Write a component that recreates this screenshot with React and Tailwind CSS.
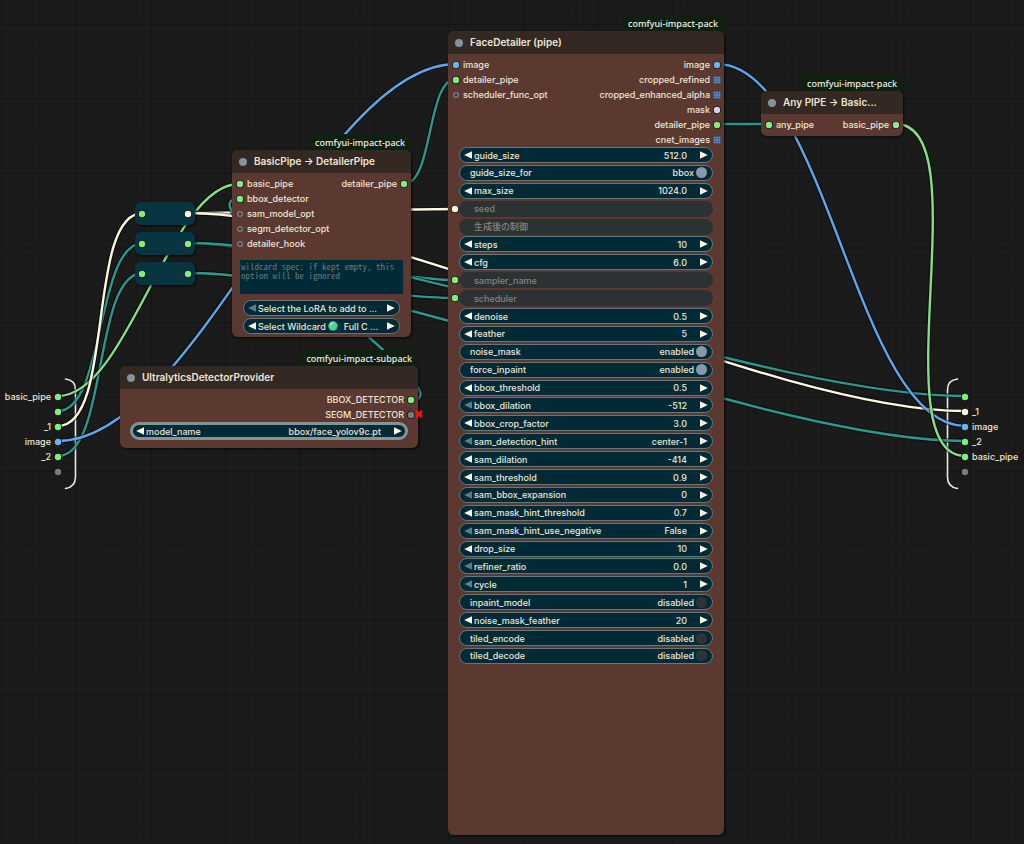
import React from 'react';
import clsx from 'clsx';

const DOT_COLORS = {
  green: 'text-[#7eee7e]',
  pipe: 'text-[#8fe68f]',
  blue: 'text-[#64b5f6]',
  cream: 'text-[#fff9e6]',
  mask: 'text-[#d4d0f0]',
  grey: 'text-[#7b7888]',
};

const LINKS = [
  { color: '#2b978d', from: [58, 411], to: [143, 243] },
  { color: '#2b978d', from: [58, 456], to: [143, 273] },
  { color: '#86de86', from: [58, 396], to: [239, 184] },
  { color: '#fdf6e0', from: [58, 426], to: [143, 213] },
  { color: '#5ea5ea', from: [58, 441], to: [456, 64] },
  { color: '#fdf6e0', from: [188, 213], to: [456, 209] },
  { color: '#2b978d', from: [188, 243], to: [456, 280] },
  { color: '#2b978d', from: [188, 243], to: [965, 396] },
  { color: '#2b978d', from: [188, 273], to: [456, 298] },
  { color: '#2b978d', from: [188, 273], to: [965, 441] },
  { color: '#fdf6e0', from: [188, 213], to: [965, 411] },
  { color: '#2b978d', from: [411, 400], to: [239, 199] },
  { color: '#2b978d', from: [404, 184], to: [456, 79] },
  { color: '#2b978d', from: [717, 124], to: [768, 124] },
  { color: '#5ea5ea', from: [717, 64], to: [965, 426] },
  { color: '#86de86', from: [896, 124], to: [965, 456] },
];

const DETAILER_WIDGETS = [
  { name: 'guide_size', value: '512.0' },
  { name: 'guide_size_for', type: 'toggle', value: 'bbox', on: true },
  { name: 'max_size', value: '1024.0' },
  { name: 'seed', type: 'linked', dot: 'cream' },
  { name: '生成後の制御', type: 'linked' },
  { name: 'steps', value: '10' },
  { name: 'cfg', value: '6.0' },
  { name: 'sampler_name', type: 'linked', dot: 'green' },
  { name: 'scheduler', type: 'linked', dot: 'green' },
  { name: 'denoise', value: '0.5' },
  { name: 'feather', value: '5' },
  { name: 'noise_mask', type: 'toggle', value: 'enabled', on: true },
  { name: 'force_inpaint', type: 'toggle', value: 'enabled', on: true },
  { name: 'bbox_threshold', value: '0.5' },
  { name: 'bbox_dilation', value: '-512', atMin: true },
  { name: 'bbox_crop_factor', value: '3.0' },
  { name: 'sam_detection_hint', type: 'combo', value: 'center-1', atMin: true },
  { name: 'sam_dilation', value: '-414' },
  { name: 'sam_threshold', value: '0.9' },
  { name: 'sam_bbox_expansion', value: '0', atMin: true },
  { name: 'sam_mask_hint_threshold', value: '0.7' },
  { name: 'sam_mask_hint_use_negative', type: 'combo', value: 'False', atMin: true },
  { name: 'drop_size', value: '10' },
  { name: 'refiner_ratio', value: '0.0', atMin: true },
  { name: 'cycle', value: '1', atMin: true },
  { name: 'inpaint_model', type: 'toggle', value: 'disabled' },
  { name: 'noise_mask_feather', value: '20' },
  { name: 'tiled_encode', type: 'toggle', value: 'disabled' },
  { name: 'tiled_decode', type: 'toggle', value: 'disabled' },
];

const linkPath = ({ from: [x1, y1], to: [x2, y2] }) => {
  const d = Math.hypot(x2 - x1, y2 - y1) * 0.25;
  return `M${x1} ${y1} C${x1 + d} ${y1} ${x2 - d} ${y2} ${x2} ${y2}`;
};

const Dot = ({ color = 'grey', shape = 'solid' }) => (
  <svg viewBox="0 0 8 8" className={clsx('size-2 shrink-0', DOT_COLORS[color])} aria-hidden="true">
    {shape === 'solid' && (
      <g>
        <circle cx="4" cy="4" r="4" fill="#1c1512" />
        <circle cx="4" cy="4" r="3.2" fill="currentColor" />
      </g>
    )}
    {shape === 'hollow' && <circle cx="4" cy="4" r="2.3" fill="#41302f" stroke="currentColor" strokeWidth="1.5" />}
    {shape === 'grid' && (
      <g>
        <rect x="0.5" y="0.5" width="7" height="7" fill="#2f4f7c" />
        {[0.7, 3.1, 5.5].map((y) => [0.7, 3.1, 5.5].map((x) => (
          <rect key={`${x}-${y}`} x={x} y={y} width="1.8" height="1.8" fill="#5f93cf" />
        )))}
      </g>
    )}
  </svg>
);

const Slot = ({ label, color, shape, output }) => (
  <li className={clsx('flex h-[15px] items-center gap-[3px]', output && 'flex-row-reverse')}>
    <Dot color={color} shape={shape} />
    <span>{label}</span>
  </li>
);

const Slots = ({ inputs = [], outputs = [] }) => (
  <div className="flex justify-between pr-[3px] pl-1 pt-[3px]">
    <ul>{inputs.map((s) => <Slot key={s.label} {...s} />)}</ul>
    <ul>{outputs.map((s) => <Slot key={s.label} {...s} output />)}</ul>
  </div>
);

const Node = ({ title, badge, className, children }) => (
  <section className={clsx('absolute flex flex-col rounded-md bg-[#5b3930] shadow-[1px_1px_3px_rgba(0,0,0,0.7)]', className)}>
    <span className="absolute right-0 bottom-full flex h-4 items-center rounded-t-sm bg-[#0f1f10] px-[6px] font-['Noto_Sans'] text-[9px] font-medium whitespace-nowrap text-[#f1f1ec]">
      {badge}
    </span>
    <h2 className="flex h-[23px] shrink-0 items-center gap-[7px] rounded-t-md bg-[#332822] pl-[7px] text-[10px] font-semibold whitespace-nowrap text-[#eee6d6]">
      <span className="size-2 rounded-full bg-[#839496]" />
      {title}
    </h2>
    {children}
  </section>
);

const Arrow = ({ left, dim, name }) => (
  <button type="button" aria-label={`${left ? 'Previous' : 'Next'} ${name}`} className="shrink-0">
    <svg viewBox="0 0 8 8" className={clsx('size-2', dim ? 'text-[#5f7a80]' : 'text-[#fdf6e3]')}>
      <path d={left ? 'M8 0.2 L0.2 4 L8 7.8Z' : 'M0 0.2 L7.8 4 L0 7.8Z'} fill="currentColor" />
    </svg>
  </button>
);

const pill = 'flex min-w-0 items-center rounded-full bg-[#002b36]';

const Widget = ({ name, type = 'number', value, on, atMin, selected }) => {
  if (type === 'linked') {
    return (
      <div className="flex h-4 min-w-0 flex-1 items-center rounded-full bg-[#2c3133] pl-[15px] text-[#86857f]">
        {name}
      </div>
    );
  }
  if (type === 'toggle') {
    return (
      <label className={clsx(pill, 'h-4 flex-1 border border-[#64777c] pr-[5px] pl-[10px]')}>
        <span className="flex-1">{name}</span>
        <span>{value}</span>
        <input
          type="checkbox"
          defaultChecked={on}
          className="ml-[2px] size-[11px] appearance-none rounded-full bg-[#2f3337] checked:bg-[#8899aa]"
        />
      </label>
    );
  }
  return (
    <div
      className={clsx(
        pill,
        'flex-1',
        selected ? 'h-[18px] border-[3px] border-[#839496] px-[3px]' : 'h-4 border border-[#64777c] px-1'
      )}
    >
      <Arrow left dim={atMin} name={name} />
      <label htmlFor={name} className="ml-[2px] shrink-0">{name}</label>
      {type === 'combo' ? (
        <select
          id={name}
          className="mr-[13px] min-w-0 flex-1 appearance-none bg-transparent outline-none [text-align-last:right]"
        >
          <option>{value}</option>
        </select>
      ) : (
        <input
          id={name}
          defaultValue={value}
          className="mr-[13px] w-0 min-w-0 flex-1 bg-transparent text-right outline-none"
        />
      )}
      <Arrow name={name} />
    </div>
  );
};

const Picker = ({ name, value, dim, children }) => (
  <div className={clsx(pill, 'relative h-4 border border-[#64777c] px-1')}>
    <Arrow left dim={dim} name={name} />
    <select aria-label={name} className="ml-[2px] min-w-0 flex-1 appearance-none bg-transparent outline-none">
      <option>{value}</option>
    </select>
    {children}
    <Arrow name={name} />
  </div>
);

const Reroute = ({ className, out }) => (
  <div
    className={clsx(
      'absolute flex h-[23px] w-[60px] items-center justify-between rounded-md bg-[#073642] px-[3px] shadow-[1px_1px_3px_rgba(0,0,0,0.7)]',
      className
    )}
  >
    <Dot color="green" />
    <Dot color={out} />
  </div>
);

export default function App() {
  return (
    <main className="relative min-h-screen w-full overflow-hidden bg-[#1b1b1b] font-['Inter','Noto_Sans_CJK_JP',sans-serif] text-[9px] leading-[15px] font-medium text-[#efe7d7]">
      <svg className="absolute inset-0 size-full" aria-hidden="true">
        <defs>
          <pattern id="minor" x="2" y="24" width="7.45" height="7.45" patternUnits="userSpaceOnUse">
            <path d="M0.5 0 V7.45 M0 0.5 H7.45" stroke="#191919" strokeWidth="1" />
          </pattern>
          <pattern id="major" x="1.5" y="24" width="74.5" height="74.5" patternUnits="userSpaceOnUse">
            <path d="M0.5 0 V74.5 M0 0.5 H74.5" stroke="#141414" strokeWidth="1" />
          </pattern>
        </defs>
        <rect width="100%" height="100%" fill="url(#minor)" />
        <rect width="100%" height="100%" fill="url(#major)" />
        <g fill="none" stroke="#e8e8e8" strokeWidth="1.6" strokeLinecap="round">
          <path d="M65.5 379 Q75.5 380 75.5 390 V477 Q75.5 487 65.5 488.5" />
          <path d="M957.5 379 Q947.5 380 947.5 390 V477 Q947.5 487 957.5 488.5" />
        </g>
        <g fill="none">
          {LINKS.map((link) => (
            <g key={linkPath(link)}>
              <path d={linkPath(link)} stroke="#000" strokeOpacity="0.5" strokeWidth="4.6" />
              <path d={linkPath(link)} stroke={link.color} strokeWidth="2.4" />
            </g>
          ))}
        </g>
      </svg>

      {/* subgraph inputs / outputs */}
      <ul className="absolute top-[389px] left-0 w-[62px]">
        <Slot label="basic_pipe" color="green" output />
        <Slot label="" color="green" output />
        <Slot label="_1" color="green" output />
        <Slot label="image" color="blue" output />
        <Slot label="_2" color="green" output />
        <Slot label="" color="grey" output />
      </ul>
      <ul className="absolute top-[389px] left-[961px]">
        <Slot label="" color="green" />
        <Slot label="_1" color="cream" />
        <Slot label="image" color="blue" />
        <Slot label="_2" color="green" />
        <Slot label="basic_pipe" color="green" />
        <Slot label="" color="grey" />
      </ul>

      <Reroute className="top-[202px] left-[135px]" out="cream" />
      <Reroute className="top-[232px] left-[135px]" out="green" />
      <Reroute className="top-[262px] left-[135px]" out="green" />

      <Node title="BasicPipe → DetailerPipe" badge="comfyui-impact-pack" className="top-[150px] left-[232px] w-[179px] pb-[3px]">
        <Slots
          inputs={[
            { label: 'basic_pipe', color: 'pipe' },
            { label: 'bbox_detector', color: 'green' },
            { label: 'sam_model_opt', shape: 'hollow' },
            { label: 'segm_detector_opt', shape: 'hollow' },
            { label: 'detailer_hook', shape: 'hollow' },
          ]}
          outputs={[{ label: 'detailer_pipe', color: 'green' }]}
        />
        <textarea
          aria-label="wildcard spec"
          placeholder="wildcard spec: if kept empty, this option will be ignored"
          className="mx-2 mt-[9px] h-[34px] resize-none bg-[#002b36] px-px py-[2px] font-['Noto_Sans_Mono_CJK_JP','Liberation_Mono',monospace] text-[9px] leading-[9px] font-normal outline-none placeholder:text-[#66787c]"
        />
        <div className="mx-[11px] mt-[6px] flex flex-col gap-[2px]">
          <Picker name="Select the LoRA" value="Select the LoRA to add to ..." dim />
          <Picker name="Select Wildcard" value={'Select Wildcard\u2003\u2003Full C ...'}>
            <svg viewBox="0 0 10 10" className="pointer-events-none absolute left-[84px] size-[10px]" aria-hidden="true">
              <circle cx="5" cy="5" r="4.7" fill="#48d59a" />
              <path d="M2 3 Q4 0.8 6 2 Q3.5 3 2.5 5Z" fill="#9bf0c8" />
              <path d="M4 9.5 Q8.5 8.5 9.5 4.5 Q8 8 4 9.5Z" fill="#1d9a68" />
            </svg>
          </Picker>
        </div>
      </Node>

      <Node title="UltralyticsDetectorProvider" badge="comfyui-impact-subpack" className="top-[366px] left-[120px] w-[298px] pb-2">
        <Slots
          outputs={[
            { label: 'BBOX_DETECTOR', color: 'green' },
            { label: 'SEGM_DETECTOR', color: 'grey' },
          ]}
        />
        <svg viewBox="0 0 10 10" className="absolute top-[43px] -right-[6px] size-[10px]" aria-hidden="true">
          <path d="M2 2 L8 8 M8 2 L2 8" stroke="#fb1010" strokeWidth="2.8" />
        </svg>
        <div className="mx-[10px] flex">
          <Widget name="model_name" type="combo" value="bbox/face_yolov9c.pt" selected />
        </div>
      </Node>

      <Node title="FaceDetailer (pipe)" badge="comfyui-impact-pack" className="top-[31px] left-[448px] w-[276px] pb-[171px]">
        <Slots
          inputs={[
            { label: 'image', color: 'blue' },
            { label: 'detailer_pipe', color: 'green' },
            { label: 'scheduler_func_opt', shape: 'hollow' },
          ]}
          outputs={[
            { label: 'image', color: 'blue' },
            { label: 'cropped_refined', shape: 'grid' },
            { label: 'cropped_enhanced_alpha', shape: 'grid' },
            { label: 'mask', color: 'mask' },
            { label: 'detailer_pipe', color: 'green' },
            { label: 'cnet_images', shape: 'grid' },
          ]}
        />
        <div className="flex h-[517px] flex-col justify-between pr-[11px]">
          {DETAILER_WIDGETS.map((w) => (
            <div key={w.name} className="flex items-center">
              <span className="flex w-[11px] shrink-0 justify-end">{w.dot && <Dot color={w.dot} />}</span>
              <Widget {...w} />
            </div>
          ))}
        </div>
      </Node>

      <Node title="Any PIPE → Basic..." badge="comfyui-impact-pack" className="top-[91px] left-[761px] w-[142px] pb-1">
        <Slots
          inputs={[{ label: 'any_pipe', color: 'green' }]}
          outputs={[{ label: 'basic_pipe', color: 'pipe' }]}
        />
      </Node>
    </main>
  );
}
